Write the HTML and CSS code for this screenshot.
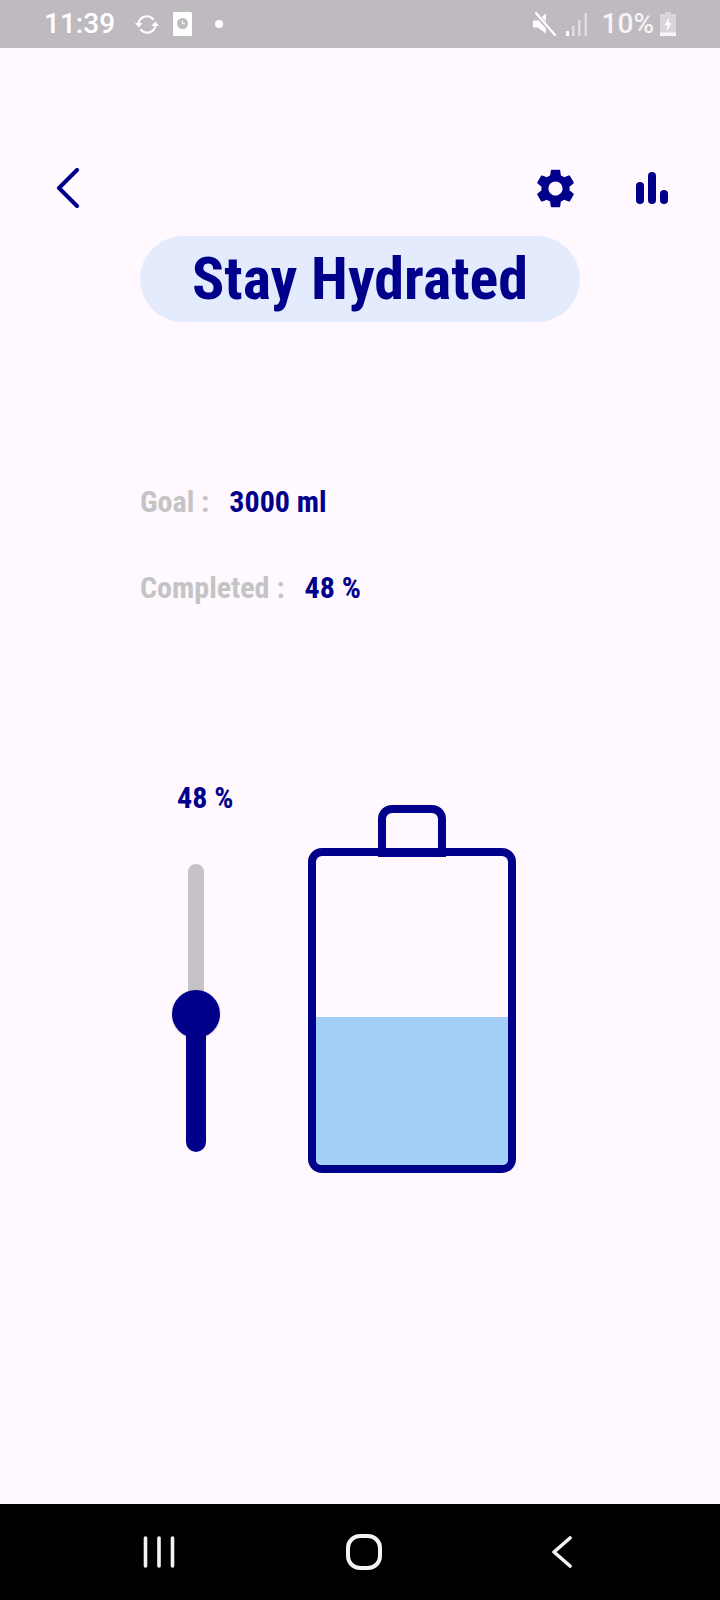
FILE: index.html
```html
<!DOCTYPE html>
<html lang="en">
<head>
<meta charset="utf-8">
<title>Stay Hydrated</title>
<link rel="stylesheet" href="styles.css">
</head>
<body>
<div class="phone">
  <div class="status">
    <span class="time">11:39</span>
    <svg class="st-sync" viewBox="0 0 24 19" width="24" height="19" fill="none" stroke="#fff" stroke-width="2" stroke-linecap="round"><path d="M3.5 8.5A8.5 8.5 0 0 1 18 4"/><path d="M20.5 10.500A8.500 8.500 0 0 1 6 15"/><path d="M0 8h7.500L3.800 12.500z" fill="#fff" stroke="none"/><path d="M24 11h-7.500l3.700-4.500z" fill="#fff" stroke="none"/></svg>
    <svg class="st-clock" viewBox="0 0 19 24" width="19" height="24"><rect width="19" height="24" rx="1.500" fill="#fff"/><circle cx="9.500" cy="11.500" r="5.500" fill="#bfbabf"/><path d="M9.500 8.500v3.300h2.400" fill="none" stroke="#fff" stroke-width="1.100"/></svg>
    <span class="st-dot"></span>
    <span class="st-gap"></span>
    <svg class="st-mute" viewBox="0 0 23 24" width="23" height="24" fill="#fff"><path d="M0 8.500h4.500L13 1.500v20L4.500 15.500H0z" opacity=".95"/><path d="M2 1l20 22" stroke="#bfbabf" stroke-width="4.500"/><path d="M3 1l19 22" stroke="#fff" stroke-width="2.200" stroke-linecap="round"/></svg>
    <svg class="st-signal" viewBox="0 0 22 24" width="22" height="24" fill="#fff"><rect x="0" y="19" width="3" height="5"/><rect x="6" y="14" width="2.500" height="10" opacity=".5"/><rect x="12" y="8" width="2.500" height="16" opacity=".5"/><rect x="18.500" y="1" width="2.500" height="23" opacity=".5"/></svg>
    <span class="pct">10%</span>
    <svg class="st-batt" viewBox="0 0 16 24" width="16" height="24" fill="#fff"><path d="M5 0h6v2h5v22H0V2h5z" opacity=".4"/><rect y="20.500" width="16" height="3.500" opacity=".8"/><path d="M9.500 5 4.500 13h3L6.500 19.500 11.500 11h-3z" opacity=".95"/></svg>
  </div>

  <main class="screen">
    <header class="toolbar">
      <svg class="ic-back" viewBox="0 0 24 40" width="24" height="40" fill="none" stroke="#00008b" stroke-width="4" stroke-linecap="round" stroke-linejoin="round"><path d="M21 2 3 20l18 18"/></svg>
      <svg class="ic-gear" viewBox="0 0 24 24" width="47" height="47" fill="#00008b"><path d="M19.140 12.940c.040-.300.060-.610.060-.940 0-.320-.020-.640-.070-.940l2.030-1.580a.49.49 0 0 0 .120-.610l-1.920-3.320a.488.488 0 0 0-.590-.220l-2.390.960c-.500-.380-1.030-.700-1.620-.940l-.360-2.540a.484.484 0 0 0-.480-.410h-3.840c-.240 0-.430.170-.470.410l-.360 2.540c-.590.240-1.130.570-1.620.940l-2.390-.960c-.220-.080-.470 0-.590.220L2.740 8.870c-.120.210-.080.470.120.610l2.030 1.580c-.050.300-.090.630-.090.940s.020.640.070.940l-2.030 1.580a.49.49 0 0 0-.120.610l1.920 3.320c.120.220.370.290.590.220l2.390-.960c.500.380 1.030.700 1.620.940l.360 2.540c.050.240.240.410.480.410h3.840c.240 0 .440-.170.470-.410l.360-2.540c.590-.240 1.130-.560 1.620-.940l2.390.960c.220.080.470 0 .590-.220l1.920-3.320c.120-.220.070-.470-.120-.610l-2.010-1.580zM12 15.600c-1.980 0-3.600-1.620-3.600-3.600s1.620-3.600 3.600-3.600 3.600 1.620 3.600 3.600-1.620 3.600-3.600 3.600z"/></svg>
      <svg class="ic-bars" viewBox="0 0 32 32" width="32" height="32" fill="#00008b"><rect x="0" y="10" width="8" height="22" rx="4"/><rect x="12" y="0" width="8" height="32" rx="4"/><rect x="24" y="18" width="8" height="14" rx="4"/></svg>
    </header>

    <h1 class="title">Stay Hydrated</h1>

    <section class="stats">
      <p class="stat"><span class="stat-label">Goal :</span><span class="stat-value">3000 ml</span></p>
      <p class="stat"><span class="stat-label">Completed :</span><span class="stat-value">48 %</span></p>
    </section>

    <section class="gauge">
      <div class="level">
        <span class="level-text">48 %</span>
        <div class="slider">
          <div class="track-rest"></div>
          <div class="track-active"></div>
          <div class="thumb"></div>
        </div>
      </div>
      <div class="bottle">
        <div class="cap"></div>
        <div class="water" style="height: 48%"></div>
      </div>
    </section>
  </main>

  <nav class="navbar">
    <svg viewBox="0 0 32 32" width="32" height="32" fill="none" stroke="#f4f4f4" stroke-width="3.600" stroke-linecap="round"><path d="M2.500 2v28M16 2v28M29.500 2v28"/></svg>
    <svg viewBox="0 0 36 36" width="36" height="36" fill="none" stroke="#f4f4f4" stroke-width="4"><rect x="2" y="2" width="32" height="32" rx="12"/></svg>
    <svg viewBox="0 0 20 32" width="20" height="32" fill="none" stroke="#f4f4f4" stroke-width="3.600" stroke-linecap="round" stroke-linejoin="round"><path d="M18 2 2 16l16 14"/></svg>
  </nav>
</div>
</body>
</html>
```

FILE: styles.css
```css
* { box-sizing: border-box; }

html, body { margin: 0; padding: 0; }

body {
  width: 720px;
  height: 1600px;
  background: #fff8fe;
  font-family: "Roboto Condensed", Roboto, "Liberation Sans", sans-serif;
  overflow: hidden;
}

.phone {
  display: flex;
  flex-direction: column;
  height: 1600px;
}

/* status bar */
.status {
  flex: none;
  height: 48px;
  background: #bfbabf;
  display: flex;
  align-items: center;
  padding: 0 44px;
  color: #fff;
  font-family: Roboto, sans-serif;
}

.time { font-size: 28px; font-weight: 500; line-height: 48px; width: 70px; }
.st-sync { margin-left: 21px; }
.st-clock { margin-left: 14px; }
.st-dot { width: 8px; height: 8px; border-radius: 50%; background: #fff; margin-left: 23px; }
.st-gap { flex: 1; }
.st-signal { margin-left: 10px; }
.pct { font-size: 28px; font-weight: 500; line-height: 48px; margin-left: 14px; opacity: .85; }
.st-batt { margin-left: 6px; }

/* main screen */
.screen {
  flex: 1;
  display: flex;
  flex-direction: column;
  padding: 120px 52px 0 56px;
}

.toolbar {
  display: flex;
  align-items: center;
  height: 40px;
}

.ic-back { flex: none; }
.ic-gear { margin-left: auto; }
.ic-bars { margin-left: 57px; }

.title {
  align-self: flex-start;
  width: 440px;
  height: 86px;
  margin: 28px 0 0 84px;
  border-radius: 43px;
  background: #e4ebfc;
  color: #00008b;
  font-size: 60px;
  font-weight: 700;
  font-stretch: 75%;
  line-height: 86px;
  text-align: center;
}

.stats {
  margin: 162px 0 0 84px;
  display: flex;
  flex-direction: column;
  gap: 50px;
}

.stat {
  margin: 0;
  display: flex;
  gap: 20px;
  font-size: 30px;
  font-weight: 700;
  font-stretch: 75%;
  line-height: 36px;
}

.stat-label { color: #c4c4c4; }
.stat-value { color: #00008b; }

.gauge {
  display: flex;
  align-items: flex-start;
  margin: 174px 0 0 116px;
}

.level {
  width: 136px;
  position: relative;
  padding-top: 84px;
}

.level-text {
  position: absolute;
  top: 0;
  left: 5px;
  color: #00008b;
  font-size: 30px;
  font-weight: 700;
  font-stretch: 75%;
  line-height: 36px;
}

.slider {
  position: relative;
  width: 48px;
  height: 288px;
  margin-top: -0px;
}

.track-rest {
  position: absolute;
  left: 16px;
  top: 0;
  width: 16px;
  height: 150px;
  background: #c4c2c4;
  border-radius: 8px 8px 0 0;
}

.track-active {
  position: absolute;
  left: 14px;
  top: 150px;
  bottom: 0;
  width: 20px;
  background: #00008b;
  border-radius: 0 0 10px 10px;
}

.thumb {
  position: absolute;
  left: 0;
  top: 126px;
  width: 48px;
  height: 48px;
  border-radius: 50%;
  background: #00008b;
  box-shadow: 0 1px 2px rgba(0, 0, 0, .2);
}

.bottle {
  position: relative;
  width: 208px;
  height: 325px;
  margin-top: 68px;
  border: 8px solid #00008b;
  border-radius: 14px;
  display: flex;
  align-items: flex-end;
}

.cap {
  position: absolute;
  left: 62px;
  top: -51px;
  width: 68px;
  height: 52px;
  border: 8px solid #00008b;
  border-radius: 14px 14px 0 0;
}

.water {
  width: 100%;
  background: #a4cff9;
  border-radius: 0 0 5px 5px;
}

/* navigation bar */
.navbar {
  flex: none;
  height: 96px;
  background: #000;
  display: flex;
  align-items: center;
  padding: 0 148px 0 143px;
  justify-content: space-between;
}
```
